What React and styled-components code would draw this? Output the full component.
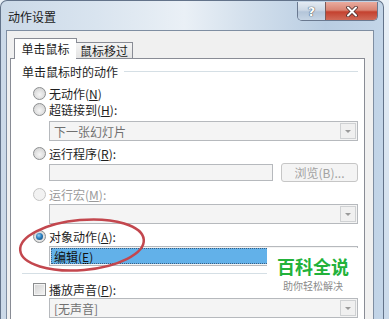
import React from "react";
import styled, { createGlobalStyle, css } from "styled-components";

const GlobalStyle = createGlobalStyle`
  html, body {
    margin: 0;
    padding: 0;
  }
  body {
    background: #dce7f2;
    font-family: "Noto Sans CJK SC", "Liberation Sans", sans-serif;
    font-size: 12px;
    color: #1e1e1e;
  }
`;

const Page = styled.div`
  position: relative;
  width: 389px;
  height: 319px;
  overflow: hidden;
  background: linear-gradient(180deg, #e9f0f7, #c9d9ea);
`;

const Window = styled.div`
  box-sizing: border-box;
  width: 384px;
  height: 330px;
  border: 1px solid #63738a;
  border-bottom: none;
  border-radius: 7px 7px 0 0;
  background: linear-gradient(
    90deg,
    #cbd9e8 0%,
    #d9e4ef 25%,
    #eaf0f6 48%,
    #d2dfec 65%,
    #b9cde2 85%,
    #c3d5e8 100%
  );
  display: flex;
  flex-direction: column;
`;

const TitleBar = styled.div`
  height: 29px;
  display: flex;
  align-items: flex-start;
`;

const Title = styled.div`
  margin: 9px 0 0 7px;
  line-height: 14px;
  font-size: 12px;
  color: #1a1a1a;
`;

const Caption = styled.div`
  margin: 1px 5px 0 auto;
  display: flex;
  height: 18px;
  border: 1px solid #6a7990;
  border-top: none;
  border-radius: 0 0 5px 5px;
  overflow: hidden;
`;

const CapButton = styled.div`
  display: flex;
  align-items: center;
  justify-content: center;
  height: 100%;
  font-family: "DejaVu Sans", sans-serif;
  font-weight: bold;
  font-size: 13px;
  color: #fff;
  text-shadow: 0 0 1px #33404f, 0 0 1px #33404f;
  ${(p) =>
    p.$close
      ? css`
          width: 51px;
          border-left: 1px solid #7a5a58;
          background: linear-gradient(
            180deg,
            #e9ab9e 0%,
            #d98574 45%,
            #c4412f 55%,
            #d06a58 100%
          );
        `
      : css`
          width: 27px;
          background: linear-gradient(
            180deg,
            #e3eaf2 0%,
            #ccd8e5 45%,
            #b3c5d9 55%,
            #c6d5e5 100%
          );
        `}
`;

const Client = styled.div`
  flex: 1;
  margin: 0 9px 0 5px;
  border: 1px solid #7f8ea2;
  border-bottom: none;
  background: #f0f0f0;
  padding: 7px 8px 0 3px;
  display: flex;
  flex-direction: column;
`;

const Tabs = styled.div`
  display: flex;
  align-items: flex-end;
  padding-left: 4px;
  height: 21px;
  margin-bottom: -1px;
  position: relative;
  z-index: 1;
`;

const Tab = styled.div`
  box-sizing: border-box;
  display: flex;
  align-items: center;
  justify-content: center;
  border: 1px solid #898c95;
  border-bottom: none;
  ${(p) =>
    p.$active
      ? css`
          width: 63px;
          height: 21px;
          background: #fff;
          padding-bottom: 2px;
        `
      : css`
          width: 57px;
          height: 16px;
          margin-bottom: 1px;
          margin-left: -1px;
          border-left: none;
          background: linear-gradient(180deg, #f4f4f4, #e4e4e4);
        `}
`;

const Panel = styled.div`
  flex: 1;
  background: #fff;
  border: 1px solid #898c95;
  padding: 5px 6px 0 11px;
  display: flex;
  flex-direction: column;
`;

const Legend = styled.div`
  height: 14px;
  display: flex;
  align-items: center;
  &::after {
    content: "";
    flex: 1;
    height: 1px;
    margin-left: 6px;
    background: #d5dfe5;
  }
`;

const Row = styled.div`
  height: 14px;
  display: flex;
  align-items: center;
  gap: 3px;
  margin: ${(p) => p.$top}px 0 0 11px;
  color: ${(p) => (p.$disabled ? "#9a9a9a" : "#1e1e1e")};
`;

const Radio = styled.span`
  box-sizing: border-box;
  width: 13px;
  height: 13px;
  border-radius: 50%;
  border: 1px solid ${(p) => (p.$disabled ? "#c4c4c4" : "#8c8e90")};
  background: radial-gradient(
    circle at 50% 60%,
    #f6f6f6 0%,
    #dedede 55%,
    #cfcfcf 100%
  );
  display: flex;
  align-items: center;
  justify-content: center;
  ${(p) =>
    p.$disabled &&
    css`
      background: #f2f2f2;
    `}
  &::after {
    content: "";
    display: ${(p) => (p.$checked ? "block" : "none")};
    width: 7px;
    height: 7px;
    border-radius: 50%;
    background: radial-gradient(
      circle at 40% 35%,
      #9ad3f5 0%,
      #2a7fc0 45%,
      #123e66 100%
    );
  }
`;

const Check = styled.span`
  box-sizing: border-box;
  width: 13px;
  height: 13px;
  border: 1px solid #8c8e90;
  background: linear-gradient(135deg, #d2d2d2, #f5f5f5);
  box-shadow: inset 0 0 0 1px #f4f4f4;
`;

const Combo = styled.div`
  box-sizing: border-box;
  height: 20px;
  margin: ${(p) => p.$top}px 0 0 27px;
  border: 1px solid #b6b9bd;
  background: #f4f4f4;
  display: flex;
  align-items: center;
  color: #707070;
  padding-left: 4px;
`;

const ComboArrow = styled.span`
  box-sizing: border-box;
  margin: 0 1px 0 auto;
  width: 16px;
  height: 16px;
  border: 1px solid #cfd1d3;
  background: #f0f0f0;
  display: flex;
  align-items: center;
  justify-content: center;
  &::after {
    content: "";
    border-left: 3px solid transparent;
    border-right: 3px solid transparent;
    border-top: 3px solid #9a9a9a;
  }
`;

const Highlight = styled.div`
  flex: 1;
  height: 16px;
  margin-left: -3px;
  background: #62b1e9;
  outline: 1px dotted #3b5f82;
  outline-offset: -1px;
  color: #111;
  display: flex;
  align-items: center;
  padding-left: 3px;
`;

const InputRow = styled.div`
  height: 18px;
  display: flex;
  align-items: center;
  gap: 8px;
  margin: 3px 0 0 27px;
`;

const TextBox = styled.div`
  box-sizing: border-box;
  width: 224px;
  height: 17px;
  border: 1px solid #b6b9bd;
  background: #f4f4f4;
`;

const Button = styled.div`
  box-sizing: border-box;
  width: 77px;
  height: 19px;
  border: 1px solid #c6c6c6;
  border-radius: 3px;
  background: #f4f4f4;
  color: #a2a2a2;
  display: flex;
  align-items: center;
  justify-content: center;
`;

const Separator = styled.div`
  height: 1px;
  margin-top: 7px;
  background: #d5dfe5;
`;

const Key = styled.span`
  text-decoration: underline;
`;

const Watermark = styled.div`
  position: absolute;
  left: 267px;
  top: 248px;
  width: 92px;
  height: 48px;
  background: #fff;
  display: flex;
  flex-direction: column;
  align-items: center;
  padding-top: 9px;
  box-sizing: border-box;
`;

const MarkTitle = styled.div`
  font-size: 18px;
  font-weight: bold;
  line-height: 18px;
  color: #22b23a;
`;

const MarkSub = styled.div`
  font-size: 10px;
  line-height: 11px;
  margin-top: 5px;
  color: #8a8a8a;
`;

const Overlay = styled.svg`
  position: absolute;
  left: 0;
  top: 0;
  pointer-events: none;
`;

function Label({ text, k, colon }) {
  return (
    <span>
      {text}({<Key>{k}</Key>}){colon ? ":" : ""}
    </span>
  );
}

export default function App() {
  return (
    <Page>
      <GlobalStyle />
      <Window>
        <TitleBar>
          <Title>动作设置</Title>
          <Caption>
            <CapButton>?</CapButton>
            <CapButton $close>
              <svg width="12" height="11" viewBox="0 0 12 11">
                <path
                  d="M2 1.5 L10 9.5 M10 1.5 L2 9.5"
                  stroke="#4a2c2a"
                  strokeWidth="3.6"
                  strokeLinecap="round"
                />
                <path
                  d="M2 1.5 L10 9.5 M10 1.5 L2 9.5"
                  stroke="#fff"
                  strokeWidth="2"
                  strokeLinecap="round"
                />
              </svg>
            </CapButton>
          </Caption>
        </TitleBar>
        <Client>
          <Tabs>
            <Tab $active>单击鼠标</Tab>
            <Tab>鼠标移过</Tab>
          </Tabs>
          <Panel>
            <Legend>单击鼠标时的动作</Legend>
            <Row $top={8}>
              <Radio />
              <Label text="无动作" k="N" />
            </Row>
            <Row $top={2}>
              <Radio />
              <Label text="超链接到" k="H" colon />
            </Row>
            <Combo $top={5}>
              下一张幻灯片
              <ComboArrow />
            </Combo>
            <Row $top={5}>
              <Radio />
              <Label text="运行程序" k="R" colon />
            </Row>
            <InputRow>
              <TextBox />
              <Button>浏览(B)...</Button>
            </InputRow>
            <Row $top={6} $disabled>
              <Radio $disabled />
              <Label text="运行宏" k="M" colon />
            </Row>
            <Combo $top={3}>
              <ComboArrow />
            </Combo>
            <Row $top={5}>
              <Radio $checked />
              <Label text="对象动作" k="A" colon />
            </Row>
            <Combo $top={3}>
              <Highlight>
                编辑(<Key>E</Key>)
              </Highlight>
            </Combo>
            <Separator />
            <Row $top={8}>
              <Check />
              <Label text="播放声音" k="P" colon />
            </Row>
            <Combo $top={2}>
              [无声音]
              <ComboArrow />
            </Combo>
          </Panel>
        </Client>
      </Window>
      <Watermark>
        <MarkTitle>百科全说</MarkTitle>
        <MarkSub>助你轻松解决</MarkSub>
      </Watermark>
      <Overlay width="389" height="319">
        <ellipse
          cx="82"
          cy="245"
          rx="62"
          ry="25"
          transform="rotate(-5 82 245)"
          fill="none"
          stroke="#c3474e"
          strokeWidth="2.5"
        />
      </Overlay>
    </Page>
  );
}
